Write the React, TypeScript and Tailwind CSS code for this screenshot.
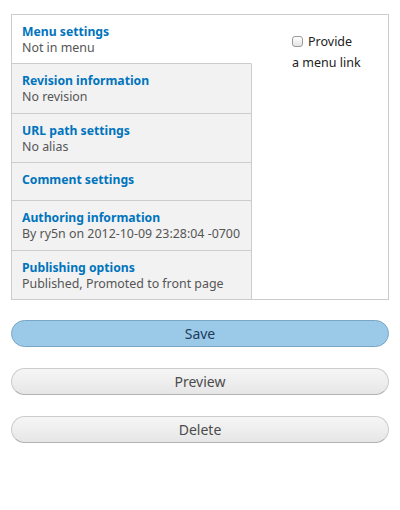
const tabs = [
  { title: "Menu settings", summary: "Not in menu", active: true, pad: "pt-[9px] pb-[7px]" },
  { title: "Revision information", summary: "No revision", pad: "pt-[9px] pb-[8px]" },
  { title: "URL path settings", summary: "No alias", pad: "pt-[9px] pb-[7px]" },
  { title: "Comment settings", pad: "pt-[9px] pb-[12px]" },
  { title: "Authoring information", summary: "By ry5n on 2012-10-09 23:28:04 -0700", pad: "pt-[9px] pb-[8px]" },
  { title: "Publishing options", summary: "Published, Promoted to front page", pad: "pt-[9px] pb-[7px]" },
];

export default function App() {
  return (
    <div className="w-[400px] h-[510px] bg-white font-['Noto_Sans',sans-serif] pt-[14px] px-[11px]">
      {/* Vertical tabs */}
      <div className="flex border border-[#cccccc]">
        <ul className="w-[240px] flex flex-col">
          {tabs.map((t, i) => (
            <li
              key={t.title}
              className={
                (t.active ? "bg-white border-r border-r-white " : "bg-[#f2f2f2] border-r border-r-[#cccccc] ") +
                (i < tabs.length - 1 ? "border-b border-b-[#cccccc] " : "") +
                t.pad +
                " px-[10px]"
              }
            >
              <a href="#" className="block text-[12.2px] leading-[16px] font-bold text-[#0074bd]">
                {t.title}
              </a>
              {t.summary && (
                <div className="text-[12.4px] leading-[16px] text-[#555555]">{t.summary}</div>
              )}
            </li>
          ))}
        </ul>
        <div className="flex-1 pt-[16px] pl-[40px]">
          <label className="block text-[12.5px] leading-[21px] text-[#222222]">
            <span className="inline-block align-[-1px] w-[11px] h-[11px] rounded-[3px] border border-[#9a9a9a] bg-gradient-to-b from-white to-[#e4e4e4] mr-[5px]" />
            Provide
            <br />
            a menu link
          </label>
        </div>
      </div>

      {/* Actions */}
      <div className="flex flex-col gap-[21px] mt-[20px]">
        <button className="h-[27px] rounded-full border border-[#7aa6c6] bg-[#9bcae9] text-[14px] text-[#1e3b5c]">
          Save
        </button>
        <button className="h-[27px] rounded-full border border-[#cccccc] border-b-[#b3b3b3] bg-gradient-to-b from-[#f6f6f6] to-[#e6e6e6] text-[14px] text-[#4b4b4b]">
          Preview
        </button>
        <button className="h-[27px] rounded-full border border-[#cccccc] border-b-[#b3b3b3] bg-gradient-to-b from-[#f6f6f6] to-[#e6e6e6] text-[14px] text-[#4b4b4b]">
          Delete
        </button>
      </div>
    </div>
  );
}
